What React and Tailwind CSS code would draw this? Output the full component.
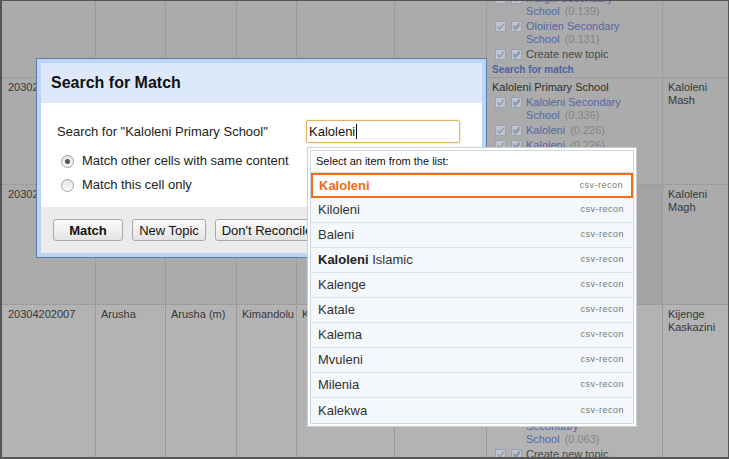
import React from "react";

// little "match" checkbox icons shown beside each candidate
const Box = ({ second }) => (
  <svg width="11" height="11" viewBox="0 0 11 11" className="shrink-0">
    <rect x="0.5" y="0.5" width="10" height="10" fill="#bfc4ca" stroke="#94a3ba" />
    {second ? (
      <>
        <path d="M2.2 4.4 L4.4 6.6 L8.8 2" fill="none" stroke="#8193b6" strokeWidth="1.1" />
        <path d="M2.2 6.4 L4.4 8.6 L8.8 4" fill="none" stroke="#8193b6" strokeWidth="1.1" />
      </>
    ) : (
      <path d="M2.3 5.6 L4.5 7.8 L8.8 3.2" fill="none" stroke="#8193b6" strokeWidth="1.2" />
    )}
  </svg>
);

const Cand = ({ lines, score, plain }) => (
  <div className="flex mt-[2px]">
    <div className="flex gap-[5px] ml-[3px] pt-[1px] shrink-0">
      <Box />
      <Box second />
    </div>
    <div className={"ml-[4px] leading-[13px] " + (plain ? "text-[#4a4a4a]" : "text-[#5566a6]")}>
      {lines.map((l, i) => (
        <div key={i}>
          {l}
          {i === lines.length - 1 && score && (
            <span className="ml-[5px] text-[#858585]">{score}</span>
          )}
        </div>
      ))}
    </div>
  </div>
);

const Cell = ({ className = "", children }) => (
  <div className={"h-full border-r border-[#9b9b9b] pl-[5px] leading-[13px] overflow-hidden " + className}>
    {children}
  </div>
);

const items = [
  { name: "Kaloleni", bold: "", active: true },
  { name: "Kiloleni" },
  { name: "Baleni" },
  { name: " Islamic", bold: "Kaloleni" },
  { name: "Kalenge" },
  { name: "Katale" },
  { name: "Kalema" },
  { name: "Mvuleni" },
  { name: "Milenia" },
  { name: "Kalekwa" },
];

const Button = ({ children, className = "" }) => (
  <button className={"h-[22px] rounded-[3px] border border-[#a9a9a9] bg-gradient-to-b from-[#fbfbfb] to-[#e4e4e4] text-[13px] text-[#111] leading-none " + className}>
    {children}
  </button>
);

const Radio = ({ checked, label }) => (
  <div className="flex items-center h-[24px] pl-[20px]">
    <div className="w-[13px] h-[13px] rounded-full border border-[#a0a0a0] bg-gradient-to-b from-[#e2e2e2] to-[#fdfdfd] flex items-center justify-center">
      {checked && <div className="w-[5px] h-[5px] rounded-full bg-[#555]" />}
    </div>
    <span className="ml-[8px] text-[13px] text-[#222]">{label}</span>
  </div>
);

export default function App() {
  return (
    <div className="relative w-[729px] h-[459px] overflow-hidden bg-[#ababab] border-t border-l-2 border-b-2 border-r border-[#555] font-['Liberation_Sans',Arial,sans-serif] text-[11px] text-[#383838]">
      {/* table behind the dimmed overlay */}
      <div className="flex flex-col h-full">
        <div className="flex h-[77px] border-b border-dotted border-[#8f8f8f] shrink-0">
          <Cell className="w-[94px]" />
          <Cell className="w-[70px]" />
          <Cell className="w-[71px]" />
          <Cell className="w-[60px]" />
          <Cell className="w-[98px]" />
          <Cell className="w-[92px]" />
          <Cell className="w-[176px] pl-[4px]">
            <div className="mt-[-11px]">
              <Cand lines={["Mbigili Secondary", "School"]} score="(0.139)" />
              <Cand lines={["Oloirien Secondary", "School"]} score="(0.131)" />
              <Cand lines={["Create new topic"]} plain />
              <div className="mt-[2px] text-[10px] font-bold leading-[13px] text-[#4e62a3]">Search for match</div>
            </div>
          </Cell>
          <Cell className="flex-1 border-r-0" />
        </div>

        <div className="flex h-[107px] border-b border-dotted border-[#8f8f8f] shrink-0">
          <Cell className="w-[94px] pl-[6px] pt-[3px]">20302202004</Cell>
          <Cell className="w-[70px] pt-[3px]">Kilifi</Cell>
          <Cell className="w-[71px] pt-[3px]">Kaloleni</Cell>
          <Cell className="w-[60px] pt-[3px]">Kaloleni</Cell>
          <Cell className="w-[98px] pt-[3px]">Kaloleni</Cell>
          <Cell className="w-[92px] pt-[3px]">Kaloleni</Cell>
          <Cell className="w-[176px] pl-[4px] pt-[3px]">
            <div className="text-[#2f2f2f]">Kaloleni Primary School</div>
            <Cand lines={["Kaloleni Secondary", "School"]} score="(0.336)" />
            <Cand lines={["Kaloleni"]} score="(0.226)" />
            <Cand lines={["Kaloleni"]} score="(0.226)" />
          </Cell>
          <Cell className="flex-1 border-r-0 pt-[3px]">
            <div>Kaloleni</div>
            <div>Mash</div>
          </Cell>
        </div>

        <div className="flex h-[120px] border-b border-dotted border-[#8f8f8f] shrink-0">
          <Cell className="w-[94px] pl-[6px] pt-[3px]">20302202005</Cell>
          <Cell className="w-[70px] pt-[3px]">Kilifi</Cell>
          <Cell className="w-[71px] pt-[3px]">Kaloleni</Cell>
          <Cell className="w-[60px] pt-[3px]">Kaloleni</Cell>
          <Cell className="w-[98px] pt-[3px]">Kaloleni</Cell>
          <Cell className="w-[92px] pt-[3px]">Kaloleni</Cell>
          <Cell className="w-[176px] pl-[4px] pt-[3px] bg-[#a3a3a3]">
            <div className="text-[#2f2f2f]">Kaloleni Magh School</div>
          </Cell>
          <Cell className="flex-1 border-r-0 pt-[3px]">
            <div>Kaloleni</div>
            <div>Magh</div>
          </Cell>
        </div>

        <div className="flex flex-1 bg-[#b3b3b3]">
          <Cell className="w-[94px] pl-[6px] pt-[3px]">20304202007</Cell>
          <Cell className="w-[70px] pt-[3px]">Arusha</Cell>
          <Cell className="w-[71px] pt-[3px]">Arusha (m)</Cell>
          <Cell className="w-[60px] pl-[4px] pt-[3px]">Kimandolu</Cell>
          <Cell className="w-[98px] pt-[3px]">Kijenge</Cell>
          <Cell className="w-[92px] pt-[3px]">Kijenge</Cell>
          <Cell className="w-[176px] pl-[4px] pt-[3px]">
            <div className="text-[#2f2f2f]">Kijenge Kaskazini</div>
            <Cand lines={["Kijenge Primary", "School"]} score="(0.412)" />
            <Cand lines={["Kijenge Juu Primary", "School"]} score="(0.201)" />
            <Cand lines={["Kaskazini", "Secondary"]} score="" />
            <Cand lines={["Kijenge Kaskazini", "Secondary", "School"]} score="(0.063)" />
            <Cand lines={["Create new topic"]} plain />
          </Cell>
          <Cell className="flex-1 border-r-0 pt-[3px]">
            <div>Kijenge</div>
            <div>Kaskazini</div>
          </Cell>
        </div>
      </div>

      {/* Search for Match dialog */}
      <div className="absolute left-[34px] top-[57px] w-[451px] h-[200px] border border-[#5b7ca6] bg-[#bcd4f6] p-[4px] flex flex-col">
        <div className="h-[40px] bg-[#dde9fb] flex items-center pl-[10px] shrink-0">
          <span className="text-[16px] font-bold text-[#111]">Search for Match</span>
        </div>
        <div className="h-[104px] bg-white pt-[17px] shrink-0">
          <div className="flex items-center h-[23px] pl-[16px]">
            <span className="w-[249px] shrink-0 text-[13px] text-[#222]">Search for "Kaloleni Primary School"</span>
            <div className="w-[154px] h-[23px] rounded-[2px] border border-[#e3b45c] shadow-[0_0_2px_#f3cf86] flex items-center pl-[2px] text-[13px] text-[#111]">
              Kaloleni
              <span className="w-px h-[15px] bg-black ml-px" />
            </div>
          </div>
          <div className="mt-[6px]">
            <Radio checked label="Match other cells with same content" />
            <Radio label="Match this cell only" />
          </div>
        </div>
        <div className="flex-1 bg-[#ebebeb] flex items-start gap-[9px] pl-[12px] pt-[12px]">
          <Button className="w-[70px] font-bold">Match</Button>
          <Button className="w-[74px]">New Topic</Button>
          <Button className="w-[104px]">Don't Reconcile</Button>
        </div>
      </div>

      {/* suggestion dropdown */}
      <div className="absolute left-[305px] top-[146px] w-[330px] border border-[#cdcdcd] bg-white p-[2px]">
        <div className="border border-[#cdd7e2]">
          <div className="h-[22px] flex items-center pl-[5px] border-b border-[#d3dbe5] text-[11px] text-[#111]">
            Select an item from the list:
          </div>
          {items.map((it, i) => (
            <div
              key={i}
              className={
                "h-[25px] flex items-center justify-between " +
                (it.active
                  ? "bg-white border-2 border-[#f06d1c] pl-[6px] pr-[8px]"
                  : "bg-[#f4f7fb] border-b border-[#dce3eb] last:border-b-0 pl-[7px] pr-[9px]")
              }
            >
              <span className={"text-[13px] " + (it.active ? "font-bold text-[#f06b14]" : "text-[#333]")}>
                {it.bold && <b className="text-[#222]">{it.bold}</b>}
                {it.name}
              </span>
              <span className="text-[9px] tracking-[0.5px] text-[#777]">csv-recon</span>
            </div>
          ))}
        </div>
      </div>
    </div>
  );
}
